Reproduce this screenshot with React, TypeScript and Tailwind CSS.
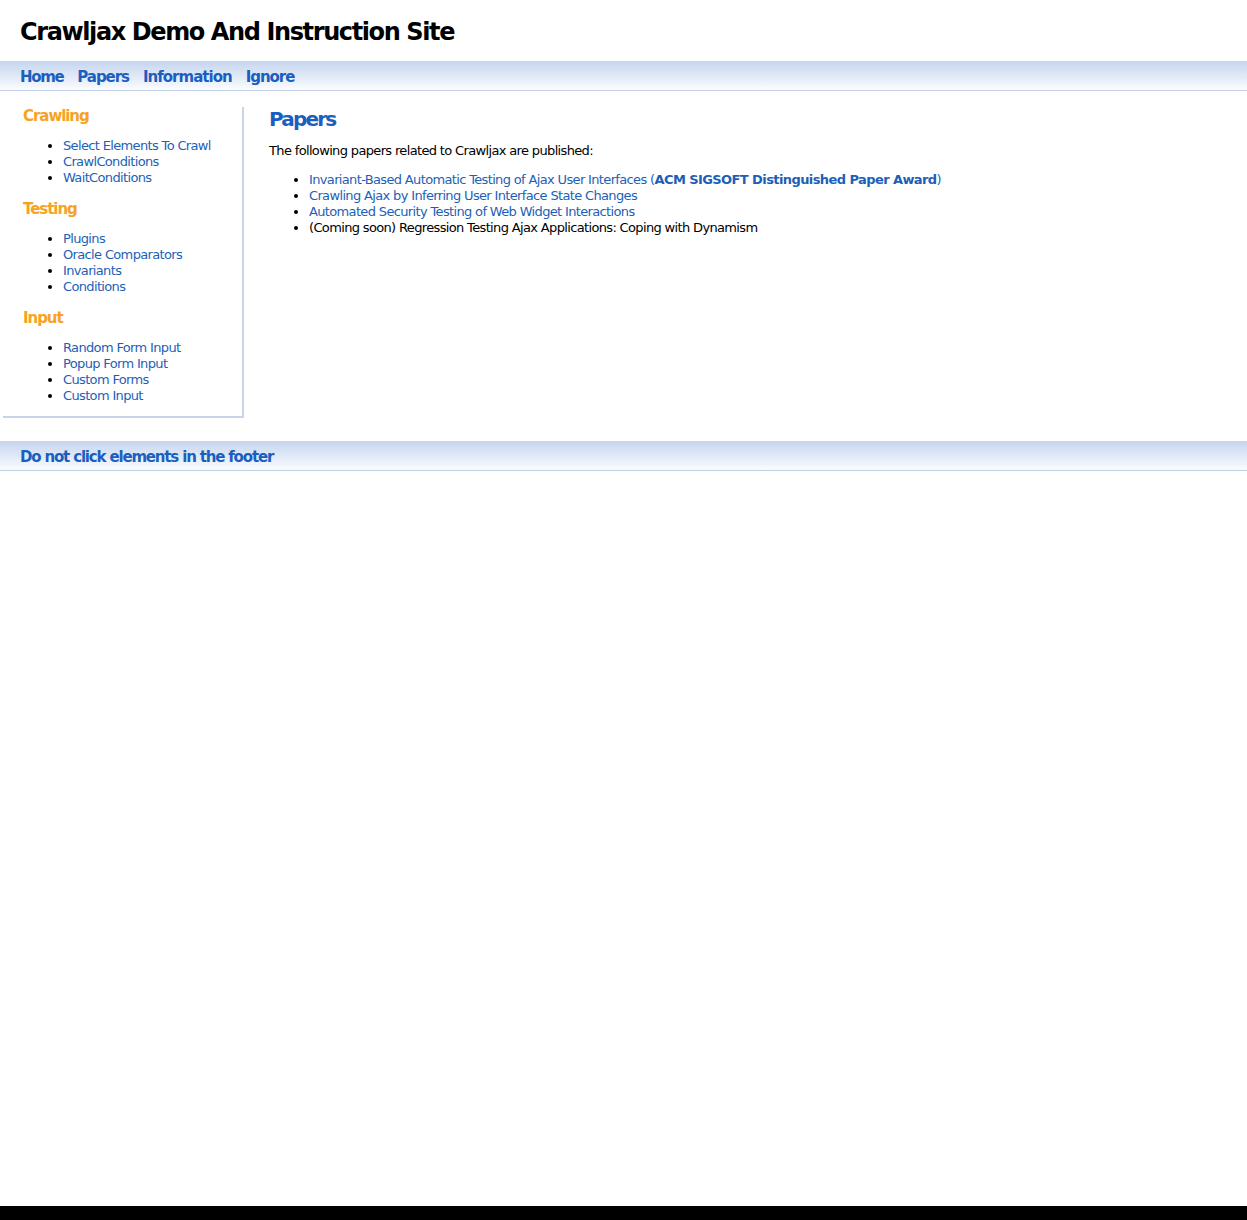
const crawling = ["Select Elements To Crawl", "CrawlConditions", "WaitConditions"];
const testing = ["Plugins", "Oracle Comparators", "Invariants", "Conditions"];
const input = ["Random Form Input", "Popup Form Input", "Custom Forms", "Custom Input"];

function SideGroup({ title, items, last }: { title: string; items: string[]; last?: boolean }) {
  return (
    <div>
      <h3 className="text-[15px] leading-[17px] font-bold tracking-[-0.07em] text-[#f7a223] pl-[20px] pt-[1px]">{title}</h3>
      <ul
        className={
          last
            ? "list-disc pl-[60px] mt-[13px] mb-[12px] text-[13px] leading-[16px] tracking-[-0.05em] text-black"
            : "list-disc pl-[60px] mt-[13px] mb-[14px] text-[13px] leading-[16px] tracking-[-0.05em] text-black"
        }
      >
        {items.map((item) => (
          <li key={item}>
            <a href="#" className="text-[#1d5fb8]">{item}</a>
          </li>
        ))}
      </ul>
    </div>
  );
}

export default function App() {
  return (
    <div className="min-h-[1220px] flex flex-col bg-white font-['DejaVu_Sans',sans-serif]">
      {/* Header */}
      <div className="h-[61px] flex items-center pl-[20px] pt-[2px]">
        <h1 className="text-[24px] font-bold tracking-[-0.058em] text-black">Crawljax Demo And Instruction Site</h1>
      </div>

      {/* Nav */}
      <div className="h-[30px] flex items-center gap-[14px] pl-[20px] pt-[3px] bg-gradient-to-b from-[#c5d5ee] to-[#fbfcfe] border-b border-[#c3cfe2]">
        <a href="#" className="text-[15px] font-bold tracking-[-0.09em] text-[#1a5fc0]">Home</a>
        <a href="#" className="text-[15px] font-bold tracking-[-0.07em] text-[#1a5fc0]">Papers</a>
        <a href="#" className="text-[15px] font-bold tracking-[-0.065em] text-[#1a5fc0]">Information</a>
        <a href="#" className="text-[15px] font-bold tracking-[-0.07em] text-[#1a5fc0]">Ignore</a>
      </div>

      {/* Body */}
      <div className="flex items-start mt-[16px]">
        <div className="ml-[3px] w-[241px] border-r-2 border-b-2 border-[#c9d3ea]">
          <SideGroup title="Crawling" items={crawling} />
          <SideGroup title="Testing" items={testing} />
          <SideGroup title="Input" items={input} last />
        </div>
        <div className="pl-[25px] text-[13px] leading-[16px] tracking-[-0.05em] text-black">
          <h2 className="text-[20px] leading-[24px] font-bold tracking-[-0.09em] text-[#1a5fc0]">Papers</h2>
          <p className="mt-[12px]">The following papers related to Crawljax are published:</p>
          <ul className="list-disc pl-[40px] mt-[13px]">
            <li>
              <a href="#" className="text-[#1d5fb8]">Invariant-Based Automatic Testing of Ajax User Interfaces</a>
              <span className="text-[#1d5fb8]"> (<b className="tracking-[-0.045em]">ACM SIGSOFT Distinguished Paper Award</b>)</span>
            </li>
            <li><a href="#" className="text-[#1d5fb8]">Crawling Ajax by Inferring User Interface State Changes</a></li>
            <li><a href="#" className="text-[#1d5fb8]">Automated Security Testing of Web Widget Interactions</a></li>
            <li>(Coming soon) Regression Testing Ajax Applications: Coping with Dynamism</li>
          </ul>
        </div>
      </div>

      {/* Footer */}
      <div className="mt-[23px] h-[30px] flex items-center pl-[20px] pt-[4px] bg-gradient-to-b from-[#c5d5ee] to-[#fbfcfe] border-b border-[#c3cfe2]">
        <span className="text-[15px] font-bold tracking-[-0.078em] text-[#1a5fc0]">Do not click elements in the footer</span>
      </div>

      <div className="flex-1" />
      <div className="h-[14px] bg-black" />
    </div>
  );
}
